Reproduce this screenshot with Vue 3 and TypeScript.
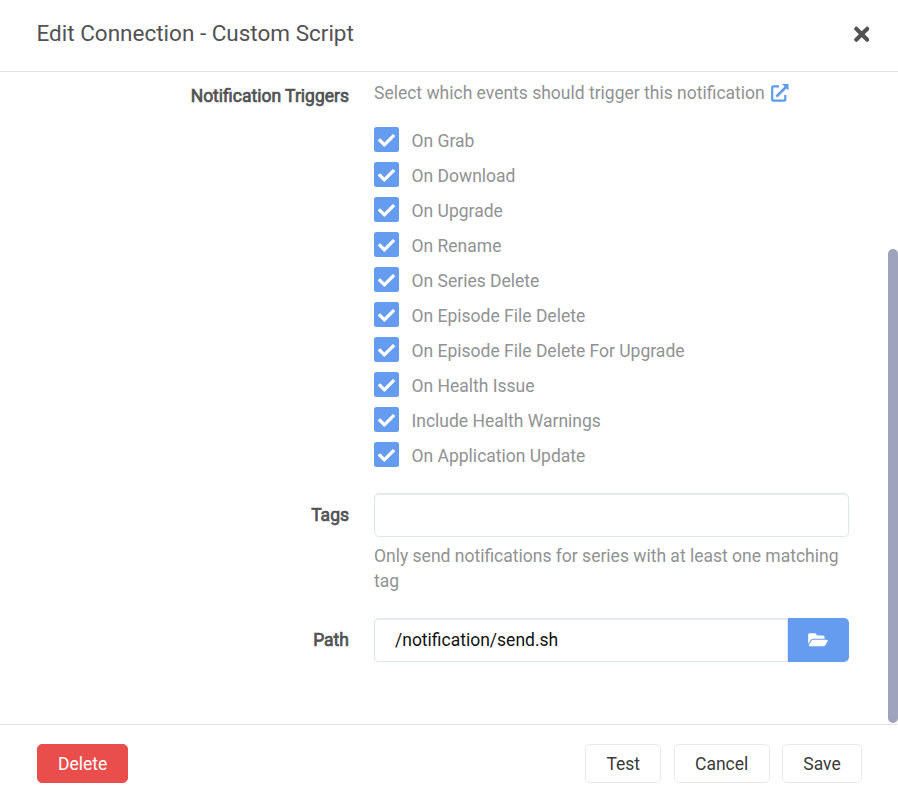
<script setup lang="ts">
import { ref } from 'vue'

interface Trigger {
  label: string
  enabled: boolean
}

const triggers = ref<Trigger[]>([
  { label: 'On Grab', enabled: true },
  { label: 'On Download', enabled: true },
  { label: 'On Upgrade', enabled: true },
  { label: 'On Rename', enabled: true },
  { label: 'On Series Delete', enabled: true },
  { label: 'On Episode File Delete', enabled: true },
  { label: 'On Episode File Delete For Upgrade', enabled: true },
  { label: 'On Health Issue', enabled: true },
  { label: 'Include Health Warnings', enabled: true },
  { label: 'On Application Update', enabled: true },
])

const tags = ref('')
const path = ref('/notification/send.sh')
const actions: string[] = ['Test', 'Cancel', 'Save']
</script>

<template>
  <div class="modal">
    <header class="header">
      <h1 class="title">Edit Connection - Custom Script</h1>
      <button class="close" type="button">
        <svg class="close-icon" viewBox="0 0 352 512">
          <path fill="currentColor" d="M242.72 256l100.07-100.07c12.28-12.28 12.28-32.19 0-44.48l-22.24-22.24c-12.28-12.28-32.19-12.28-44.48 0L176 189.28 75.93 89.21c-12.28-12.28-32.19-12.28-44.48 0L9.21 111.45c-12.28 12.28-12.28 32.19 0 44.48L109.28 256 9.21 356.07c-12.28 12.28-12.28 32.19 0 44.48l22.24 22.24c12.28 12.28 32.2 12.28 44.48 0L176 322.72l100.07 100.07c12.28 12.28 32.2 12.28 44.48 0l22.24-22.24c12.28-12.28 12.28-32.19 0-44.48L242.72 256z" />
        </svg>
      </button>
    </header>

    <main class="body">
      <form class="form" @submit.prevent>
        <div class="group">
          <span class="label">Notification Triggers</span>
          <div class="field">
            <div class="help triggers-help">
              <span>Select which events should trigger this notification</span>
              <svg class="link-icon" viewBox="0 0 18 18">
                <path d="M8 2.4H2.1a.9.9 0 0 0-.9.9v12.4a.9.9 0 0 0 .9.9h11.3a.9.9 0 0 0 .9-.9V11" fill="none" stroke="currentColor" stroke-width="2.2" />
                <path d="M5.4 12.6L15 3" fill="none" stroke="currentColor" stroke-width="2.7" />
                <path d="M11 0h6.5v6.5z" fill="currentColor" />
              </svg>
            </div>
            <div class="triggers">
              <label v-for="trigger in triggers" :key="trigger.label" class="trigger">
                <input v-model="trigger.enabled" class="native" type="checkbox" />
                <span class="box">
                  <svg v-if="trigger.enabled" class="check" viewBox="0 0 512 512">
                    <path fill="currentColor" d="M173.898 439.404l-166.4-166.4c-9.997-9.997-9.997-26.206 0-36.204l36.203-36.204c9.997-9.998 26.207-9.998 36.204 0L192 312.69 432.095 72.596c9.997-9.997 26.207-9.997 36.204 0l36.203 36.204c9.997 9.997 9.997 26.206 0 36.204l-294.4 294.401c-9.998 9.997-26.207 9.997-36.204-.001z" />
                  </svg>
                </span>
                <span class="trigger-text">{{ trigger.label }}</span>
              </label>
            </div>
          </div>
        </div>

        <div class="group">
          <span class="label">Tags</span>
          <div class="field">
            <input v-model="tags" class="input" type="text" />
            <div class="help">Only send notifications for series with at least one matching tag</div>
          </div>
        </div>

        <div class="group">
          <span class="label">Path</span>
          <div class="field path-field">
            <input v-model="path" class="input path-input" type="text" />
            <button class="browse" type="button">
              <svg class="folder" viewBox="0 0 576 512">
                <path fill="currentColor" d="M572.694 292.093L500.27 416.248A63.997 63.997 0 0 1 444.989 448H45.025c-18.523 0-30.064-20.093-20.731-36.093l72.424-124.155A64 64 0 0 1 152 256h399.964c18.523 0 30.064 20.093 20.73 36.093zM152 224h328v-48c0-26.51-21.49-48-48-48H272l-64-64H48C21.49 64 0 85.49 0 112v278.046l69.077-118.418C86.214 242.25 117.989 224 152 224z" />
              </svg>
            </button>
          </div>
        </div>
      </form>
      <div class="scrollbar"><div class="thumb"></div></div>
    </main>

    <footer class="footer">
      <button class="button danger" type="button">Delete</button>
      <button v-for="action in actions" :key="action" class="button" type="button">{{ action }}</button>
    </footer>
  </div>
</template>

<style>
body {
  background: #fff;
}
</style>

<style scoped>
.modal {
  display: flex;
  flex-direction: column;
  box-sizing: border-box;
  width: 100%;
  height: 798px;
  overflow: hidden;
  background: #fff;
  color: #515253;
  font-family: Roboto, "Liberation Sans", sans-serif;
  font-size: 17.5px;
  line-height: 25px;
}

.modal * {
  box-sizing: border-box;
}

button,
input {
  margin: 0;
  font: inherit;
}

.header {
  display: flex;
  flex: none;
  align-items: center;
  justify-content: space-between;
  height: 72px;
  padding: 0 29px 3px 36.5px;
  border-bottom: 1px solid #e2e2e2;
}

.title {
  margin: 0;
  padding-bottom: 3px;
  font-size: 22.5px;
  font-weight: 400;
  line-height: 32px;
}

.close {
  display: flex;
  padding: 0;
  border: 0;
  background: none;
  color: #515253;
}

.close-icon {
  width: 15.5px;
  height: 22.5px;
}

.body {
  display: flex;
  flex: 1;
  min-height: 0;
}

.form {
  display: flex;
  flex: 1;
  flex-direction: column;
  gap: 25px;
  padding: 8px 39px 0 37px;
}

.group {
  display: grid;
  grid-template-columns: 312px 475px;
  column-gap: 25px;
}

.label {
  padding-top: 10px;
  text-align: right;
  font-weight: 400;
  -webkit-text-stroke: 0.7px #515253;
}

.group:first-child .label {
  padding-top: 4px;
}

.help {
  padding-top: 7px;
  margin-bottom: -1px;
  color: #909293;
}

.triggers-help {
  display: flex;
  align-items: center;
  gap: 6px;
  margin-bottom: 0;
  padding-top: 1px;
}

.link-icon {
  width: 18px;
  height: 18px;
  margin-bottom: 1px;
  color: #5d9cec;
}

.triggers {
  display: flex;
  flex-direction: column;
  gap: 10px;
  padding-top: 21px;
  padding-bottom: 1px;
}

.trigger {
  display: flex;
  gap: 12.5px;
  height: 25px;
  color: #909293;
}

.native {
  position: absolute;
  opacity: 0;
  pointer-events: none;
}

.box {
  display: flex;
  align-items: center;
  justify-content: center;
  width: 25px;
  height: 25px;
  border-radius: 2.5px;
  background: #659cef;
  color: #fff;
}

.check {
  width: 17px;
  height: 17px;
  margin-top: 1px;
}

.trigger-text {
  padding-top: 2px;
}

.input {
  display: block;
  width: 100%;
  height: 44px;
  padding: 0 20px;
  border: 1px solid #dde6e9;
  border-radius: 5px;
  outline: 0;
  background: #fff;
  box-shadow: inset 0 1px 1px rgba(0, 0, 0, 0.075);
  color: #111;
}

.path-field {
  display: flex;
}

.path-input {
  flex: 1;
  min-width: 0;
  border-radius: 5px 0 0 5px;
}

.browse {
  display: flex;
  align-items: center;
  justify-content: center;
  width: 61px;
  height: 44px;
  padding: 0 1px 0 0;
  border: 0;
  border-radius: 0 5px 5px 0;
  background: #659cef;
  color: #fff;
}

.folder {
  width: 20px;
  height: 17.5px;
}

.scrollbar {
  display: flex;
  flex-direction: column;
  justify-content: flex-end;
  width: 10px;
  padding-bottom: 1px;
}

.thumb {
  height: 474px;
  border-radius: 5px;
  background: #9fa3bb;
}

.footer {
  display: flex;
  flex: none;
  align-items: flex-start;
  gap: 12.5px;
  height: 74px;
  padding: 19px 36px 0 37px;
  border-top: 1px solid #e2e2e2;
}

.button {
  height: 39px;
  padding: 1px 20.25px 0;
  border: 1px solid #eaeaea;
  border-radius: 5px;
  background: #fff;
  color: #3a3a3a;
}

.danger {
  margin-right: auto;
  padding: 1px 20px 0;
  border-color: #e94e4c;
  background: #e94e4c;
  color: #fff;
}
</style>
